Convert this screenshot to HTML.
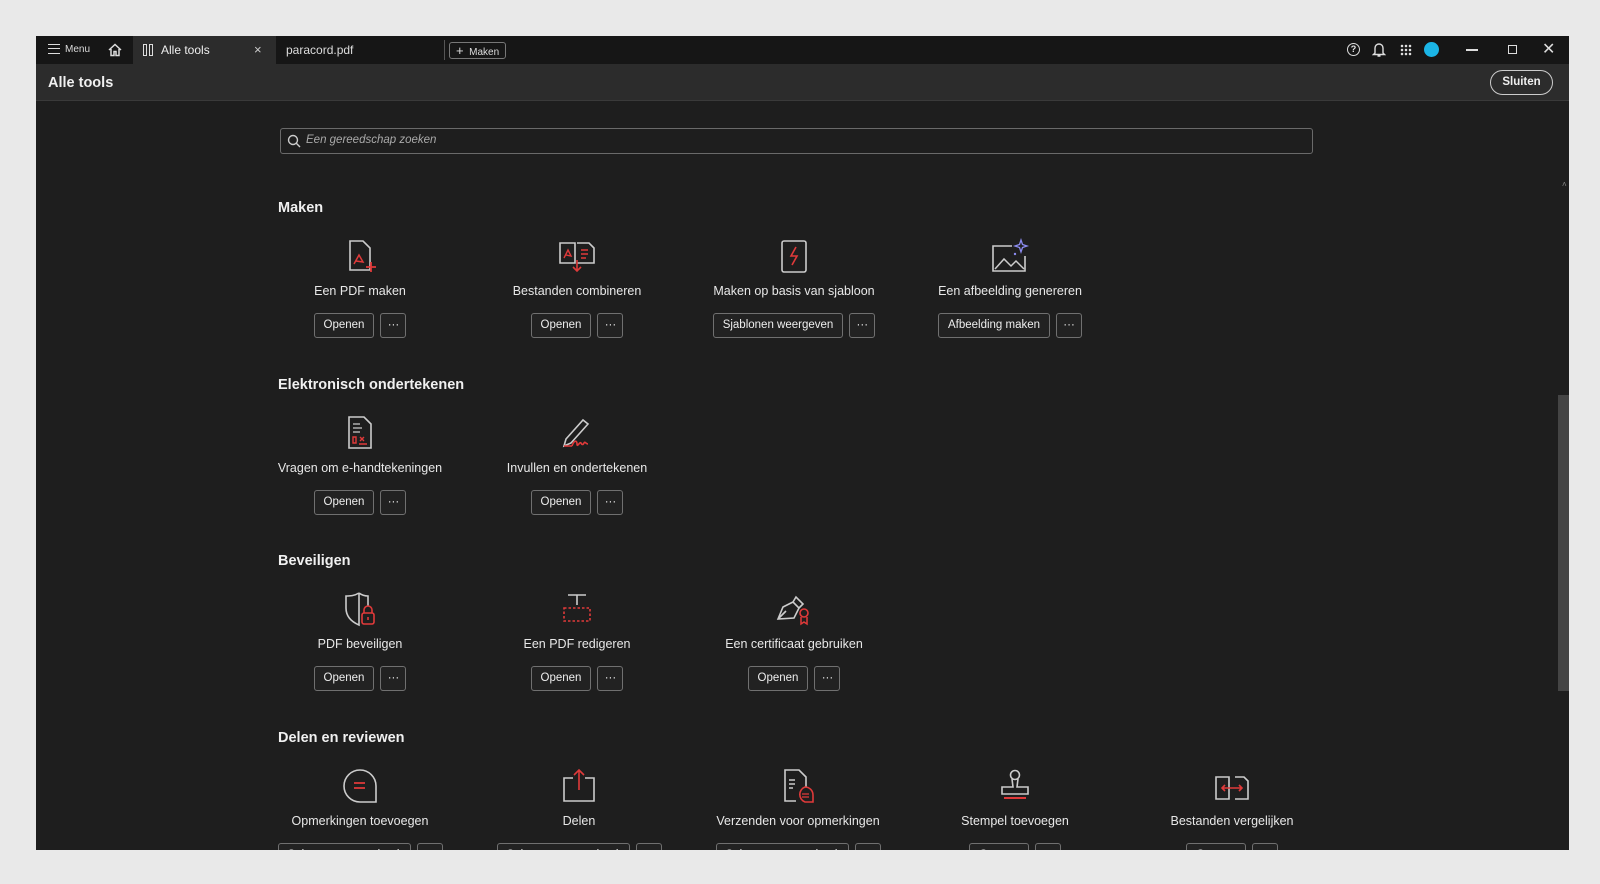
<!DOCTYPE html>
<html><head><meta charset="utf-8"><style>
*{box-sizing:border-box;margin:0;padding:0}
body{width:1600px;height:884px;background:#e9e9e9;font-family:"Liberation Sans",Arial,sans-serif;position:relative;overflow:hidden;color:#e6e6e6}
#win{position:absolute;left:36px;top:36px;width:1533px;height:814px;background:#1e1e1e;overflow:hidden}
#tabs{position:absolute;left:0;top:0;width:100%;height:28px;background:#161616}
#hdr{position:absolute;left:0;top:28px;width:100%;height:37px;background:#2c2c2c;border-bottom:1px solid #3a3a3a}
.a{position:absolute}
.h{font-size:14.5px;font-weight:bold;color:#f0f0f0}
.col{position:absolute;width:220px;margin-left:-110px;text-align:center}
.lbl{font-size:12.5px;color:#e8e8e8;white-space:nowrap}
.btns{display:flex;justify-content:center;gap:6px;margin-top:15px}
.b{height:25px;border:1px solid #707070;border-radius:3px;background:#222;font-size:11.5px;line-height:23px;padding:0 9px;color:#eee;white-space:nowrap;overflow:hidden}
.d{width:26px;padding:0;text-align:center}
svg{display:block;margin:0 auto}
</style></head><body>
<div id="win">
 <div id="tabs">
  <div class="a" style="left:12px;top:8px;width:12px;height:10px;border-top:1.5px solid #ddd;border-bottom:1.5px solid #ddd"><div style="margin-top:3px;border-top:1.5px solid #ddd"></div></div>
  <div class="a" style="left:29px;top:8px;font-size:10px;color:#ddd">Menu</div>
  <svg class="a" style="left:71px;top:6px" width="16" height="16" viewBox="0 0 16 16"><path d="M2 8L8 2.5 14 8M4 7v6.5h3v-4h2v4h3V7" fill="none" stroke="#ddd" stroke-width="1.5"/></svg>
  <div class="a" style="left:97px;top:0;width:143px;height:28px;background:#2c2c2c"></div>
  <div class="a" style="left:107px;top:8px;width:4px;height:12px;border:1.3px solid #ddd"></div>
  <div class="a" style="left:113px;top:8px;width:4px;height:12px;border:1.3px solid #ddd"></div>
  <div class="a" style="left:125px;top:7px;font-size:12px;color:#eee">Alle tools</div>
  <div class="a" style="left:218px;top:6px;font-size:13px;color:#ccc">×</div>
  <div class="a" style="left:250px;top:7px;font-size:12px;color:#ddd">paracord.pdf</div>
  <div class="a" style="left:408px;top:4px;width:1px;height:20px;background:#555"></div>
  <div class="a" style="left:413px;top:6px;width:57px;height:17px;border:1px solid #777;border-radius:3px;font-size:10px;color:#ddd;line-height:15px;padding-left:6px"><span style="font-size:13px">+</span>&nbsp; Maken</div>
  <div class="a" style="left:1311px;top:7px;width:13px;height:13px;border:1.4px solid #ddd;border-radius:50%;font-size:9px;text-align:center;line-height:10px;font-weight:bold">?</div>
  <svg class="a" style="left:1336px;top:6px" width="14" height="16" viewBox="0 0 14 16"><path d="M3 11V6a4 4 0 018 0v5l1.5 1.5h-11zM5.5 14h3" fill="none" stroke="#ddd" stroke-width="1.4"/></svg>
  <div class="a" style="left:1364px;top:8px;width:12px;height:12px;background:radial-gradient(circle,#ddd 1.2px,transparent 1.4px) 0 0/4px 4px"></div>
  <div class="a" style="left:1388px;top:6px;width:15px;height:15px;border-radius:50%;background:#1bb5e6"></div>
  <div class="a" style="left:1430px;top:13px;width:12px;height:1.5px;background:#ddd"></div>
  <div class="a" style="left:1472px;top:9px;width:9px;height:9px;border:1.3px solid #ddd"></div>
  <div class="a" style="left:1506px;top:3px;font-size:16px;color:#ddd">✕</div>
 </div>
 <div id="hdr">
  <div class="a h" style="left:12px;top:11px;font-size:14.5px">Alle tools</div>
  <div class="a" style="left:1454px;top:6px;width:63px;height:25px;border:1.5px solid #ccc;border-radius:13px;font-size:11.5px;font-weight:bold;text-align:center;line-height:22px;color:#eee">Sluiten</div>
 </div>
 <div class="a" style="left:244px;top:92px;width:1033px;height:26px;border:1px solid #6a6a6a;border-radius:3px"></div>
 <svg class="a" style="left:251px;top:98px" width="14" height="14" viewBox="0 0 14 14"><circle cx="6" cy="6" r="4.5" fill="none" stroke="#ccc" stroke-width="1.4"/><path d="M9.3 9.3L13 13" stroke="#ccc" stroke-width="1.4"/></svg>
 <div class="a" style="left:270px;top:98px;font-size:11.5px;font-style:italic;color:#aaa">Een gereedschap zoeken</div>
 <div class="a" style="left:1522px;top:359px;width:11px;height:296px;background:#444"></div>
 <div class="a" style="left:1526px;top:144px;font-size:8px;color:#888">˄</div>

 <div class="a h" style="left:242px;top:164px">Maken</div>
 <div class="a h" style="left:242px;top:341px">Elektronisch ondertekenen</div>
 <div class="a h" style="left:242px;top:517px">Beveiligen</div>
 <div class="a h" style="left:242px;top:694px">Delen en reviewen</div>

 <div class="col" style="left:324px;top:202px"><svg width="36" height="36" viewBox="0 0 36 36"><path d="M8 3h13l7 7v22H8z" fill="none" stroke="#ccc" stroke-width="1.6"/><path d="M12 26l5-9 4 7-7-1" fill="none" stroke="#e03a3a" stroke-width="1.5"/><path d="M29 24v10M24 29h10" stroke="#e03a3a" stroke-width="1.8"/></svg><div class="lbl" style="margin-top:10px">Een PDF maken</div><div class="btns"><div class="b">Openen</div><div class="b d">···</div></div></div>
 <div class="col" style="left:541px;top:202px"><svg width="40" height="36" viewBox="0 0 40 36"><path d="M3 5h15v20H3zM20 5h12l5 5v15H20" fill="none" stroke="#ccc" stroke-width="1.6"/><path d="M7 20l4-8 3 6-5-1M24 12h7M24 16h7M24 20h5" fill="none" stroke="#e03a3a" stroke-width="1.4"/><path d="M20 22v11M16 29l4 4 4-4" fill="none" stroke="#e03a3a" stroke-width="1.6"/></svg><div class="lbl" style="margin-top:10px">Bestanden combineren</div><div class="btns"><div class="b">Openen</div><div class="b d">···</div></div></div>
 <div class="col" style="left:758px;top:202px"><svg width="36" height="36" viewBox="0 0 36 36"><rect x="6" y="3" width="24" height="31" rx="2" fill="none" stroke="#ccc" stroke-width="1.6"/><path d="M20 9l-5 9h6l-5 9" fill="none" stroke="#e03a3a" stroke-width="1.6"/></svg><div class="lbl" style="margin-top:10px">Maken op basis van sjabloon</div><div class="btns"><div class="b">Sjablonen weergeven</div><div class="b d">···</div></div></div>
 <div class="col" style="left:974px;top:202px"><svg width="40" height="36" viewBox="0 0 40 36"><path d="M22 8H3v25h32V18" fill="none" stroke="#ccc" stroke-width="1.6"/><path d="M5 31l9-10 7 7 5-5 8 8" fill="none" stroke="#ccc" stroke-width="1.5"/><path d="M31 2l1.5 4.5L37 8l-4.5 1.5L31 14l-1.5-4.5L25 8l4.5-1.5z" fill="none" stroke="#8c8cf0" stroke-width="1.3"/><circle cx="25" cy="16" r="1.2" fill="#8c8cf0"/></svg><div class="lbl" style="margin-top:10px">Een afbeelding genereren</div><div class="btns"><div class="b">Afbeelding maken</div><div class="b d">···</div></div></div>

 <div class="col" style="left:324px;top:379px"><svg width="36" height="36" viewBox="0 0 36 36"><path d="M7 2h15l7 7v24H7z" fill="none" stroke="#ccc" stroke-width="1.6"/><path d="M11 9h7M11 13h9M11 17h7" stroke="#ccc" stroke-width="1.3"/><path d="M11 22v6h3v-6zM18 22l4 4M22 22l-4 4M17 29h8" fill="none" stroke="#e03a3a" stroke-width="1.4"/></svg><div class="lbl" style="margin-top:10px">Vragen om e-handtekeningen</div><div class="btns"><div class="b">Openen</div><div class="b d">···</div></div></div>
 <div class="col" style="left:541px;top:379px"><svg width="40" height="36" viewBox="0 0 40 36"><path d="M7 31l2-7L26 5l5 4-17 19z" fill="none" stroke="#ccc" stroke-width="1.6"/><path d="M7 31h8M15 31c2-6 5-6 5-2s3-3 4-1 2 2 3 0 2 1 4 1" fill="none" stroke="#e03a3a" stroke-width="1.6"/></svg><div class="lbl" style="margin-top:10px">Invullen en ondertekenen</div><div class="btns"><div class="b">Openen</div><div class="b d">···</div></div></div>

 <div class="col" style="left:324px;top:555px"><svg width="36" height="36" viewBox="0 0 36 36"><path d="M17 2C12 5 8 5 4 5v12c0 9 6 14 13 17V2" fill="none" stroke="#ccc" stroke-width="1.6"/><path d="M17 2c4 3 7 3 9 3v10" fill="none" stroke="#ccc" stroke-width="1.6"/><rect x="20" y="22" width="12" height="11" rx="2" fill="none" stroke="#e03a3a" stroke-width="1.6"/><path d="M22 22v-3a4 4 0 018 0v3M26 26v3" fill="none" stroke="#e03a3a" stroke-width="1.6"/></svg><div class="lbl" style="margin-top:10px">PDF beveiligen</div><div class="btns"><div class="b">Openen</div><div class="b d">···</div></div></div>
 <div class="col" style="left:541px;top:555px"><svg width="36" height="36" viewBox="0 0 36 36"><path d="M9 4h18M18 4v10" stroke="#ccc" stroke-width="1.6"/><rect x="5" y="17" width="26" height="13" fill="none" stroke="#e03a3a" stroke-width="1.6" stroke-dasharray="2.5 2"/></svg><div class="lbl" style="margin-top:10px">Een PDF redigeren</div><div class="btns"><div class="b">Openen</div><div class="b d">···</div></div></div>
 <div class="col" style="left:758px;top:555px"><svg width="40" height="36" viewBox="0 0 40 36"><path d="M4 28l5-12 10-5 6 6-5 10zM4 28l8-8M19 11l3-5 7 7-4 4" fill="none" stroke="#ccc" stroke-width="1.6"/><circle cx="30" cy="22" r="4" fill="none" stroke="#e03a3a" stroke-width="1.6"/><path d="M27 26v7l3-2 3 2v-7" fill="none" stroke="#e03a3a" stroke-width="1.5"/></svg><div class="lbl" style="margin-top:10px">Een certificaat gebruiken</div><div class="btns"><div class="b">Openen</div><div class="b d">···</div></div></div>

 <div class="col" style="left:324px;top:732px"><svg width="40" height="36" viewBox="0 0 40 36"><path d="M20 2a16 16 0 0116 16v16H20A16 16 0 1120 2z" fill="none" stroke="#ccc" stroke-width="1.6"/><path d="M14 15h11M14 20h11" stroke="#e03a3a" stroke-width="1.8"/></svg><div class="lbl" style="margin-top:10px">Opmerkingen toevoegen</div><div class="btns"><div class="b" style="width:133px">Selecteren om te beginnen</div><div class="b d"></div></div></div>
 <div class="col" style="left:543px;top:732px"><svg width="36" height="36" viewBox="0 0 36 36"><path d="M12 10H3v23h30V10h-9" fill="none" stroke="#ccc" stroke-width="1.6"/><path d="M18 22V2M13 7l5-5 5 5" fill="none" stroke="#e03a3a" stroke-width="1.6"/></svg><div class="lbl" style="margin-top:10px">Delen</div><div class="btns"><div class="b" style="width:133px">Selecteren om te beginnen</div><div class="b d"></div></div></div>
 <div class="col" style="left:762px;top:732px"><svg width="40" height="36" viewBox="0 0 40 36"><path d="M18 33H7V2h14l7 7v10" fill="none" stroke="#ccc" stroke-width="1.6"/><path d="M11 12h6M11 16h6M11 20h4" stroke="#ccc" stroke-width="1.4"/><path d="M27 19a8 8 0 018 8v7h-8a8 8 0 010-15z" fill="none" stroke="#e03a3a" stroke-width="1.6"/><path d="M24 26h7M24 29h7" stroke="#e03a3a" stroke-width="1.3"/></svg><div class="lbl" style="margin-top:10px">Verzenden voor opmerkingen</div><div class="btns"><div class="b" style="width:133px">Selecteren om te beginnen</div><div class="b d"></div></div></div>
 <div class="col" style="left:979px;top:732px"><svg width="40" height="36" viewBox="0 0 40 36"><circle cx="20" cy="7" r="4.5" fill="none" stroke="#ccc" stroke-width="1.6"/><path d="M17 11l1 8H7v7h26v-7H22l1-8" fill="none" stroke="#ccc" stroke-width="1.6"/><path d="M9 30h22" stroke="#e03a3a" stroke-width="2"/></svg><div class="lbl" style="margin-top:10px">Stempel toevoegen</div><div class="btns"><div class="b" style="width:60px">Openen</div><div class="b d"></div></div></div>
 <div class="col" style="left:1196px;top:732px"><svg width="40" height="36" viewBox="0 0 40 36"><path d="M4 9h13v22H4zM23 9h9l4 4v18H23" fill="none" stroke="#ccc" stroke-width="1.6"/><path d="M10 20h20M13 17l-3 3 3 3M27 17l3 3-3 3" fill="none" stroke="#e03a3a" stroke-width="1.6"/></svg><div class="lbl" style="margin-top:10px">Bestanden vergelijken</div><div class="btns"><div class="b" style="width:60px">Openen</div><div class="b d"></div></div></div>
</div>
</body></html>
